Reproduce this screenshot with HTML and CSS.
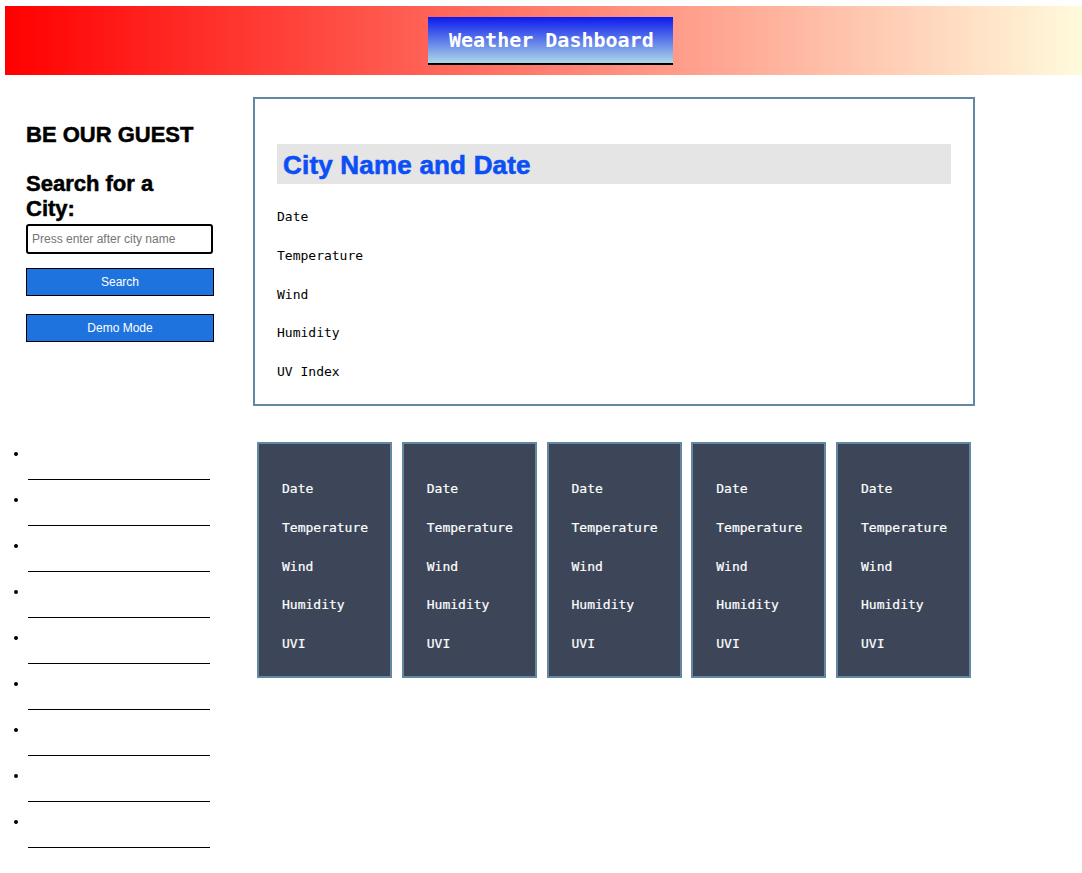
FILE: index.html
```html
<!DOCTYPE html>
<html lang="en">
<head>
<meta charset="utf-8">
<title>Weather Dashboard</title>
<link rel="stylesheet" href="styles.css">
</head>
<body>
<header class="banner">
  <h1 class="banner-title">Weather Dashboard</h1>
</header>
<div class="layout">
  <aside class="search-panel">
    <h2 class="side-heading">BE OUR GUEST</h2>
    <h2 class="side-heading search-label">Search for a City:</h2>
    <input class="city-input" type="text" placeholder="Press enter after city name">
    <button class="btn btn-search">Search</button>
    <button class="btn btn-demo">Demo Mode</button>
  </aside>
  <section class="current-card">
    <h2 class="city-title">City Name and Date</h2>
    <p class="stat">Date</p>
    <p class="stat">Temperature</p>
    <p class="stat">Wind</p>
    <p class="stat">Humidity</p>
    <p class="stat">UV Index</p>
  </section>
  <ul class="history">
    <li class="history-item"></li>
    <li class="history-item"></li>
    <li class="history-item"></li>
    <li class="history-item"></li>
    <li class="history-item"></li>
    <li class="history-item"></li>
    <li class="history-item"></li>
    <li class="history-item"></li>
    <li class="history-item"></li>
  </ul>
  <section class="forecast">
    <div class="day-card"><p class="day-stat">Date</p><p class="day-stat">Temperature</p><p class="day-stat">Wind</p><p class="day-stat">Humidity</p><p class="day-stat">UVI</p></div>
    <div class="day-card"><p class="day-stat">Date</p><p class="day-stat">Temperature</p><p class="day-stat">Wind</p><p class="day-stat">Humidity</p><p class="day-stat">UVI</p></div>
    <div class="day-card"><p class="day-stat">Date</p><p class="day-stat">Temperature</p><p class="day-stat">Wind</p><p class="day-stat">Humidity</p><p class="day-stat">UVI</p></div>
    <div class="day-card"><p class="day-stat">Date</p><p class="day-stat">Temperature</p><p class="day-stat">Wind</p><p class="day-stat">Humidity</p><p class="day-stat">UVI</p></div>
    <div class="day-card"><p class="day-stat">Date</p><p class="day-stat">Temperature</p><p class="day-stat">Wind</p><p class="day-stat">Humidity</p><p class="day-stat">UVI</p></div>
  </section>
</div>
</body>
</html>
```
FILE: styles.css
```css
* { box-sizing: border-box; }

body {
  margin: 0;
  font-family: "Liberation Sans", Arial, sans-serif;
  background: #ffffff;
  color: #000;
}

.banner {
  margin: 6px 0 0 5px;
  height: 69px;
  background: linear-gradient(to right, #ff0000, #fffadc);
  display: flex;
  justify-content: center;
  align-items: flex-start;
  padding: 11px 0 0 14px;
}

.banner-title {
  margin: 0;
  height: 48px;
  width: 245px;
  padding: 0 0 0 21px;
  display: flex;
  align-items: center;
  font-family: "DejaVu Sans Mono", monospace;
  font-weight: bold;
  font-size: 20px;
  color: #ffffff;
  background: linear-gradient(to bottom, #0b19ee, #add8e6);
  border-bottom: 2px solid #000;
}

.layout {
  display: grid;
  grid-template-columns: 253px 722px;
  grid-template-rows: auto auto;
  row-gap: 36px;
  margin-top: 22px;
}

.search-panel {
  padding: 25px 0 0 26px;
  display: flex;
  flex-direction: column;
  align-items: flex-start;
}

.side-heading {
  margin: 0;
  font-size: 22px;
  line-height: 25px;
  font-weight: bold;
  width: 188px;
  -webkit-text-stroke: 0.5px #000;
}

.search-label {
  margin-top: 24px;
  width: 160px;
}

.city-input {
  margin-top: 3px;
  width: 187px;
  height: 30px;
  border: 2px solid #000;
  border-radius: 3px;
  padding: 0 4px;
  font-family: "Liberation Sans", Arial, sans-serif;
  font-size: 12px;
}

.city-input::placeholder { color: #757575; }

.btn {
  width: 188px;
  height: 28px;
  background: #1f73de;
  color: #fff;
  border: 1px solid #000;
  font-family: "Liberation Sans", Arial, sans-serif;
  font-size: 12px;
  padding: 0;
}

.btn-search { margin-top: 14px; }
.btn-demo { margin-top: 18px; }

.current-card {
  border: 2px solid #6388a2;
  padding: 45px 22px 24px 22px;
}

.city-title {
  margin: 0 0 25px 0;
  height: 40px;
  background: #e5e5e5;
  color: #0b4ff5;
  font-size: 26px;
  font-weight: bold;
  display: flex;
  align-items: center;
  padding: 3px 0 0 6px;
  -webkit-text-stroke: 0.6px #0b4ff5;
  letter-spacing: 0.2px;
}

.stat {
  margin: 0;
  font-family: "DejaVu Sans Mono", monospace;
  font-size: 13px;
  line-height: 16px;
}

.stat + .stat { margin-top: 22.75px; }

.history {
  margin: 0;
  padding: 3px 0 0 28px;
  font-size: 12px;
}

.history-item {
  width: 182px;
  height: 35px;
  border-bottom: 1px solid #000;
  margin-bottom: 11px;
  line-height: 16px;
}

.forecast {
  display: flex;
  gap: 9.75px;
  padding: 0 4px;
  align-items: flex-start;
}

.day-card {
  flex: 1;
  height: 236px;
  background: #3c4658;
  border: 2px solid #6388a2;
  padding: 37px 0 0 23px;
}

.day-stat {
  margin: 0;
  color: #ffffff;
  font-family: "DejaVu Sans Mono", monospace;
  font-size: 13px;
  line-height: 16px;
  -webkit-text-stroke: 0.2px #ffffff;
}

.day-stat + .day-stat { margin-top: 22.75px; }
```
